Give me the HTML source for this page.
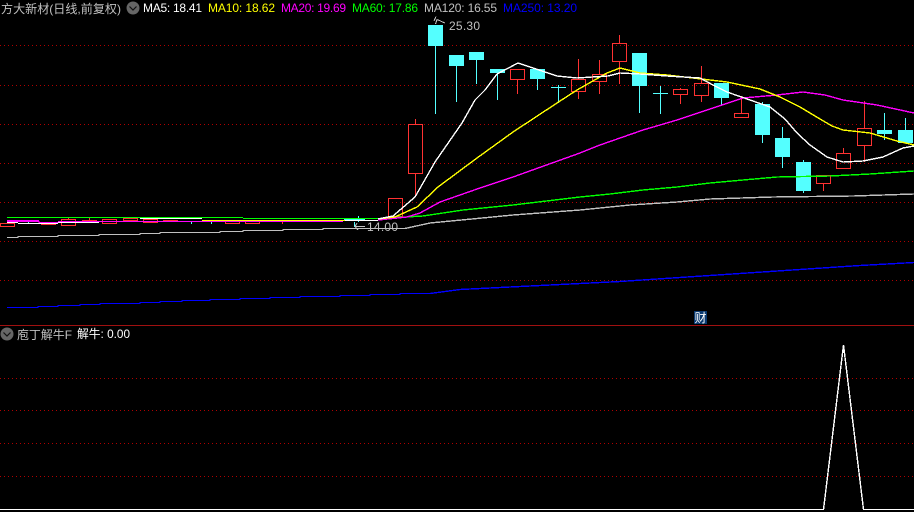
<!DOCTYPE html>
<html><head><meta charset="utf-8"><style>
html,body{margin:0;padding:0;background:#000;width:914px;height:512px;overflow:hidden}
svg{display:block}
text{font-family:"Liberation Sans","WenQuanYi Zen Hei","Noto Sans CJK SC",sans-serif;font-size:12px}
.d{stroke:#b00000;stroke-width:1;stroke-dasharray:1 3;fill:none}
.l{fill:none;stroke-width:1.4}
.r{fill:none;stroke:#ff3232;stroke-width:1}
.c{fill:#54ffff;stroke:none}
.w{stroke:#54ffff;stroke-width:1}
.wr{stroke:#ff3232;stroke-width:1}
</style></head><body>
<svg width="914" height="512" viewBox="0 0 914 512" xmlns="http://www.w3.org/2000/svg">
<rect width="914" height="512" fill="#000"/>
<g shape-rendering="crispEdges">
<path class="d" d="M0 45.5H914M0 85.5H914M0 124.5H914M0 163.5H914M0 202.5H914M0 241.5H914M0 280.5H914M0 378.5H914M0 410.5H914M0 443.5H914M0 476.5H914"/>
<path d="M0 325.5H914" stroke="#a01010" stroke-width="1"/>

<!-- left small candles -->
<path class="r" d="M0.5 223.5H14.5V226.5H0.5ZM61.5 219.5H75.5V225.5H61.5ZM102.5 219.5H116.5V223.5H102.5ZM123.5 218.5H137.5V220.5H123.5ZM143.5 219.5H157.5V222.5H143.5ZM225.5 220.5H239.5V223.5H225.5ZM245.5 220.5H259.5V223.5H245.5Z"/>
<path d="M41 223.5H56M41 224.5H56M82 220.5H97M82 221.5H97M163 220.5H178M163 221.5H178" stroke="#ff3232" fill="none"/>
<path d="M68.5 217V219M89.5 218V221M282.5 222V224M354.5 222V224" class="wr"/>
<path d="M347 218.5H362M344 219.5H365" stroke="#54ffff"/>
<path d="M358.5 216V222" class="w"/>
<path d="M354.5 222V227" class="w"/>
<path d="M28.5 222V224M191.5 222V224M211.5 222V224" stroke="#54ffff"/>

<!-- candles cyan -->
<path class="w" d="M435.5 46V114M456.5 66V102M476.5 60V84M497.5 73V100M537.5 79V90M558.5 85V103M639.5 86V113M660.5 86V114M721.5 98V105M762.5 102V143M782.5 127V168M803.5 160V193M884.5 113V140M905.5 118V143"/>
<rect class="c" x="428" y="25" width="15" height="21"/>
<rect class="c" x="449" y="55" width="15" height="11"/>
<rect class="c" x="469" y="52" width="15" height="8"/>
<rect class="c" x="490" y="69" width="15" height="4"/>
<rect class="c" x="530" y="69" width="15" height="10"/>
<path class="w" d="M551 87.5H566M653 93.5H668"/>
<rect class="c" x="632" y="53" width="15" height="33"/>
<rect class="c" x="714" y="83" width="15" height="15"/>
<rect class="c" x="755" y="104" width="15" height="31"/>
<rect class="c" x="775" y="138" width="15" height="19"/>
<rect class="c" x="796" y="162" width="15" height="29"/>
<rect class="c" x="877" y="130" width="15" height="4"/>
<rect class="c" x="898" y="130" width="15" height="13"/>

<!-- candles red -->
<path class="wr" d="M415.5 119V124M415.5 174V197M517.5 80V94M578.5 59V79M578.5 92V99M599.5 60V74M599.5 82V94M619.5 35V43M619.5 62V84M680.5 88V89M680.5 95V104M701.5 66V83M701.5 95V102M741.5 96V113M823.5 184V191M843.5 148V153M864.5 101V128M864.5 146V162"/>
<rect class="r" x="388.5" y="198.5" width="14" height="18"/>
<rect class="r" x="408.5" y="124.5" width="14" height="49"/>
<rect class="r" x="510.5" y="69.5" width="14" height="10"/>
<rect class="r" x="571.5" y="79.5" width="14" height="12"/>
<rect class="r" x="592.5" y="74.5" width="14" height="7"/>
<rect class="r" x="612.5" y="43.5" width="14" height="18"/>
<rect class="r" x="673.5" y="89.5" width="14" height="5"/>
<rect class="r" x="694.5" y="83.5" width="14" height="12"/>
<rect class="r" x="734.5" y="113.5" width="14" height="4"/>
<rect class="r" x="816.5" y="175.5" width="14" height="8"/>
<rect class="r" x="836.5" y="153.5" width="14" height="15"/>
<rect class="r" x="857.5" y="128.5" width="14" height="17"/>

<!-- left flat bands -->
<path d="M7 220.5H39" stroke="#ff00ff"/>
<path d="M7 222.5H18M18 223.5H58M58 222.5H99M99 221.5H140M140 218.5H202" stroke="#fff"/>
<path d="M7 221.5H39V222.5H58M58 221.5H343" stroke="#ff00ff" stroke-width="1"/>
<path d="M202 220.5H345" stroke="#ffff00"/>
<path d="M345 220.5H378" stroke="#fff"/>

<path class="l" stroke="#00ff00" d="M7 217.5H243M243 218.5H380L423 216L463 210L513 205L580 197L610 194L643 190L677 187L710 183L743 180L777 177L830 176L870 174L914 171"/>
<path class="l" stroke="#c0c0c0" d="M7 237.5H18V236.5H58V235.5H99V234.5H140V233.5H160V232.5H220V231.5H243V230.5H283V229.5H323V228.5H405L430 223L472 219L513 215L580 210L610 207L630 205L677 202L710 199L773 197L853 196L914 194"/>
<path class="l" stroke="#0000ff" d="M7 307.5H38V306.5H58V305.5H80V304.5H100V303.5H140V302.5H160V301.5H182V300.5H210V299.5H240V298.5H270V297.5H300V296.5H340V295.5H370V294.5H400V293.5H430L460 289.5L500 287.5L560 284.5L620 281.5L680 277.5L740 273.5L800 269.5L860 265.5L914 262.5"/>

<path class="l" stroke="#ff00ff" d="M378 220L407 217L420 213L440 202L480 188L513 177L580 153L600 145L643 130L677 120L710 109L743 98L777 95L803 92L825 95L843 100L877 105L914 113"/>
<path class="l" stroke="#ffff00" d="M378 219L395 217L417 207L438 187L477 158L513 132L557 103L577 90L607 73L620 68L640 73L667 75L693 78L727 82L760 89L780 97L800 107L820 119L832 126L843 130L870 133L897 141L914 145"/>
<path class="l" stroke="#ffffff" d="M378 219L393 216L415 197L435 162L462 123L475 100L485 90L497 74L518 63L533 68L557 76L577 78L608 76L620 73L640 74L667 76L700 78L713 85L727 92L750 100L770 107L785 119L797 133L810 145L827 157L843 162L863 161L883 157L903 148L914 146"/>
<path class="l" stroke="#fff" d="M0 509.5H823.5L843.5 345L863.5 509.5H914"/>
<path fill="none" stroke-width="1" stroke="#c0c0c0" d="M445 23L437 19.5L435.5 24M436 16.5L434 21M365 226.5H355L357 223M355 226.5L358 230"/>
</g>

<circle cx="133" cy="8" r="6.5" fill="#666"/>
<path d="M129.5 6.5L133 10L136.5 6.5" stroke="#111" stroke-width="1.2" fill="none"/>
<circle cx="7" cy="334" r="6.5" fill="#666"/>
<path d="M3.5 332.5L7 336L10.5 332.5" stroke="#111" stroke-width="1.2" fill="none"/>

<text x="1" y="13" fill="#c0c0c0" textLength="120" lengthAdjust="spacingAndGlyphs">方大新材(日线,前复权)</text>
<text x="143" y="12" fill="#ffffff" textLength="59">MA5: 18.41</text>
<text x="208" y="12" fill="#ffff00" textLength="67">MA10: 18.62</text>
<text x="281" y="12" fill="#ff00ff" textLength="65">MA20: 19.69</text>
<text x="352" y="12" fill="#00ff00" textLength="66">MA60: 17.86</text>
<text x="424" y="12" fill="#c0c0c0" textLength="73">MA120: 16.55</text>
<text x="503" y="12" fill="#0000ff" textLength="74">MA250: 13.20</text>
<text x="449" y="30" fill="#c0c0c0" textLength="31">25.30</text>
<text x="367" y="231" fill="#c0c0c0" textLength="31">14.00</text>
<text x="17" y="339" fill="#c0c0c0" textLength="55" lengthAdjust="spacingAndGlyphs">庖丁解牛F</text>
<text x="77" y="338" fill="#ffffff" textLength="53" lengthAdjust="spacingAndGlyphs">解牛: 0.00</text>
<rect x="694" y="311" width="13" height="13" fill="#0a3a70"/>
<text x="694.5" y="322" fill="#ffffff">财</text>
</svg>
</body></html>
